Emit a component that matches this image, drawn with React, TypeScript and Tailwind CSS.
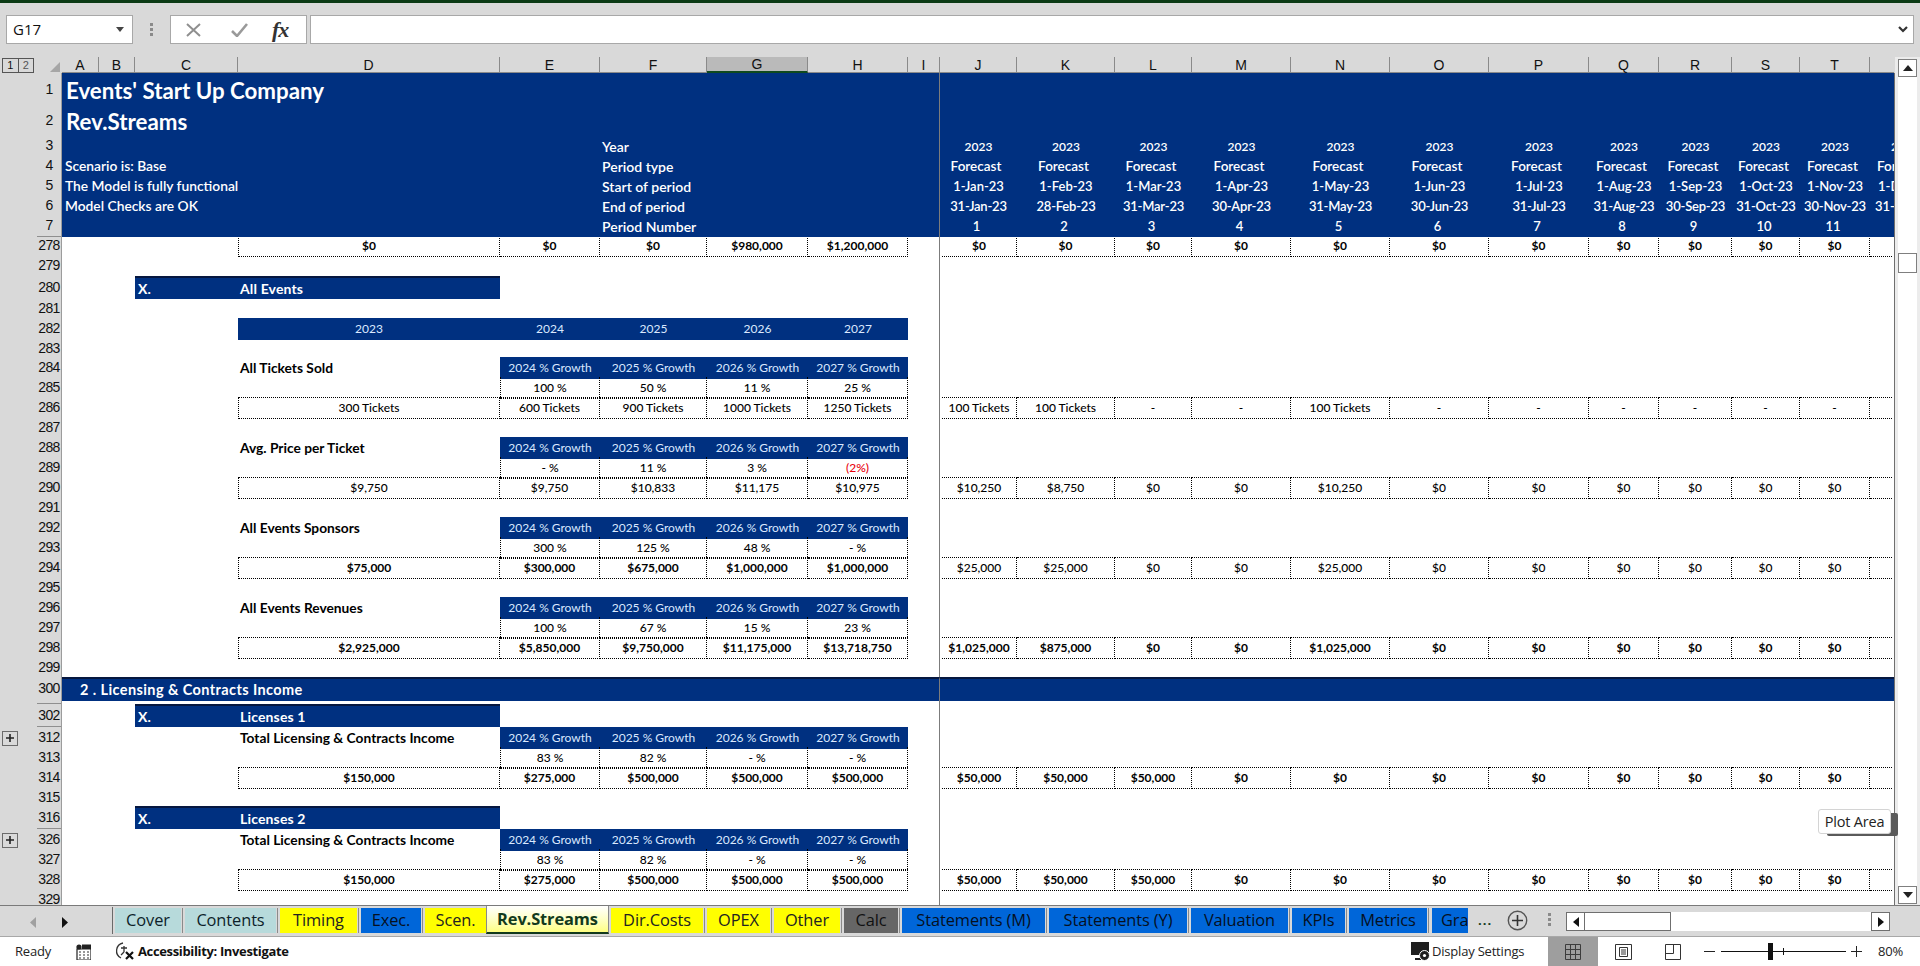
import React from "react";
import clsx from "clsx";

const gridCols =
  "grid grid-cols-[62px_37px_36px_103px_262px_100px_107px_101px_100px_32px_77px_98px_77px_99px_99px_99px_100px_70px_73px_68px_70px_24px]";
const COLS = "A B C D E F G H I J K L M N O P Q R S T U".split(" ");
const MONTH_COLS = "J K L M N O P Q R S T".split(" ");
const NAVY = "bg-[#003080]";
const WHITE_TXT = "text-white justify-start";
const OVER = "relative z-[1]";

type Cell = { t?: React.ReactNode; c?: string };
type Cells = Record<string, Cell>;

const box = "border-b border-r border-dotted border-black justify-center text-black";
const boxL = "border-l";
const boxT = "border-t";

function PlusBox() {
  return (
    <div className="w-[16px] h-[15px] border border-[#6b6b6b] flex items-center justify-center">
      <svg width="8" height="8" viewBox="0 0 8 8">
        <path d="M0 4h8M4 0v8" stroke="#222" strokeWidth="1.6" />
      </svg>
    </div>
  );
}

function Row({ n, h, cells = {}, plus, bottom }: { n: string; h: string; cells?: Cells; plus?: boolean; bottom?: string }) {
  return (
    <div className={clsx(gridCols, h, bottom)}>
      <div className="flex bg-[#d9d9d9] border-r border-[#9c9c9c]">
        <div className="w-[37px] pl-[2px] flex items-center">{plus && <PlusBox />}</div>
        <div className="flex-1 flex items-center justify-center border-b border-[#8f8f8f] font-['Liberation_Sans',sans-serif] text-[14px] tracking-[-0.6px] text-[#111]">
          {n}
        </div>
      </div>
      {COLS.map((col) => {
        const cell = cells[col];
        return (
          <div
            key={col}
            className={clsx(
              "flex items-center min-w-0 whitespace-nowrap",
              cell?.c,
              col === "I" && "border-r border-r-[#7c7c7c]"
            )}
          >
            {cell?.t}
          </div>
        );
      })}
    </div>
  );
}

const navyAll = (): Cells => Object.fromEntries(COLS.map((c) => [c, { c: NAVY }]));

function header(n: string, h: string, left: Cells, month?: (col: string, i: number) => Cell, bottom?: string, u?: Cell) {
  const cells = navyAll();
  Object.keys(left).forEach((k) => (cells[k] = { ...left[k], c: clsx(NAVY, OVER, "pt-[1px]", left[k].c) }));
  if (month)
    MONTH_COLS.forEach((col, i) => {
      const m = month(col, i);
      cells[col] = { ...m, c: clsx(NAVY, "pt-[1px] text-white justify-center font-semibold", m.c) };
    });
  if (u) cells.U = { ...u, c: clsx(NAVY, "pt-[1px] text-white justify-start font-semibold overflow-hidden", u.c) };
  return <Row key={n} n={n} h={h} cells={cells} bottom={bottom} />;
}

const starts = ["1-Jan-23", "1-Feb-23", "1-Mar-23", "1-Apr-23", "1-May-23", "1-Jun-23", "1-Jul-23", "1-Aug-23", "1-Sep-23", "1-Oct-23", "1-Nov-23"];
const ends = ["31-Jan-23", "28-Feb-23", "31-Mar-23", "30-Apr-23", "31-May-23", "30-Jun-23", "31-Jul-23", "31-Aug-23", "30-Sep-23", "31-Oct-23", "30-Nov-23"];

const sideA = (t: string): Cell => ({ t, c: clsx(WHITE_TXT, "text-[13.8px] font-semibold pl-[3px]") });
const sideF = (t: string): Cell => ({ t, c: clsx(WHITE_TXT, "text-[14px] font-semibold pl-[2px]") });

function dataRow(
  n: string,
  d: string,
  yrs: string[],
  months: string[] | null,
  weight: string,
  weightM: string = weight,
  top = true
) {
  const cells: Cells = {};
  cells.D = { t: d, c: clsx(box, boxL, top && boxT, weight) };
  ["E", "F", "G", "H"].forEach((c, i) => {
    cells[c] = { t: yrs[i], c: clsx(box, weight, top && boxT) };
  });
  if (months) {
    MONTH_COLS.forEach((c, i) => {
      cells[c] = { t: months[i], c: clsx(box, top && boxT, weightM, c === "J" && "ml-[2px]") };
    });
    cells.U = { c: clsx("border-b border-dotted border-black", top && boxT, "mr-[2px]") };
  }
  return <Row key={n} n={n} h="h-[20px]" cells={cells} />;
}

const TITLE_CELL = "font-bold text-[13.75px] text-black pl-[2px]";
const GROWTH_CELL = clsx(NAVY, "justify-center text-[#dbe9ff] text-[12px]");

function growthHead(n: string, title: string, plus?: boolean) {
  const cells: Cells = {};
  cells.D = { t: title, c: TITLE_CELL };
  ["E", "F", "G", "H"].forEach((c, i) => {
    cells[c] = { t: `${2024 + i} % Growth`, c: GROWTH_CELL };
  });
  return <Row key={n} n={n} h="h-[20px]" cells={cells} plus={plus} />;
}

function growthVals(n: string, v: (string | [string, string])[], h = "h-[20px]") {
  const cells: Cells = {};
  ["E", "F", "G", "H"].forEach((c, i) => {
    const val = v[i];
    const red = Array.isArray(val);
    cells[c] = { t: red ? val[0] : (val as string), c: clsx(box, "font-medium", c === "E" && boxL, red && "!text-[#e8000b]") };
  });
  return <Row key={n} n={n} h={h} cells={cells} />;
}

function xBanner(n: string, title: string, h: string) {
  const top = "border-t-2 border-t-[#06173f]";
  const cells: Cells = {
    C: { t: <span className="pl-[3px]">X.</span>, c: clsx(NAVY, top, "text-white font-bold text-[14px]") },
    D: { t: <span className="pl-[2px]">{title}</span>, c: clsx(NAVY, top, "text-white font-bold text-[14px] tracking-[0.15px]") },
  };
  return <Row key={n} n={n} h={h} cells={cells} />;
}

const zero = (n: number) => Array(n).fill("$0");

function ColHeader() {
  return (
    <div className={clsx(gridCols, "h-[16px] font-['Liberation_Sans',sans-serif] text-[14px] text-[#111]")}>
      <div className="flex items-center relative">
        <div className="ml-[2px] flex w-[32px] h-[15px] border border-[#555] text-[11px] leading-none">
          <span className="flex-1 flex items-center justify-center border-r border-[#555]">1</span>
          <span className="flex-1 flex items-center justify-center text-[#555]">2</span>
        </div>
        <svg className="ml-[16px] mt-[4px]" width="10" height="10" viewBox="0 0 10 10">
          <path d="M10 0v10H0z" fill="#a6a6a6" />
        </svg>
      </div>
      {COLS.map((c) => (
        <div
          key={c}
          className={clsx(
            "flex items-center justify-center border-r border-[#8a8a8a] border-b leading-none",
            c === "G" ? "bg-[#bababa] border-b-2 border-b-[#0f4a1e]" : "border-b-[#8a8a8a]",
            c === "U" && "border-r-0"
          )}
        >
          {c === "U" ? "" : c}
        </div>
      ))}
    </div>
  );
}

function FormulaBar() {
  return (
    <div className="h-[54px] pt-[12px] pl-[6px] pr-[6px] flex items-start shrink-0">
      <div className="w-[127px] h-[29px] bg-white border border-[#a8a8a8] flex items-center justify-between pl-[6px] pr-[8px]">
        <span className="font-['Open_Sans',sans-serif] text-[15px] text-[#111]">G17</span>
        <svg width="8" height="5" viewBox="0 0 8 5">
          <path d="M0 0h8L4 5z" fill="#444" />
        </svg>
      </div>
      <div className="w-[37px] flex flex-col items-center justify-center gap-[2px] h-[29px]">
        <span className="w-[3px] h-[3px] bg-[#8a8a8a]" />
        <span className="w-[3px] h-[3px] bg-[#8a8a8a]" />
        <span className="w-[3px] h-[3px] bg-[#8a8a8a]" />
      </div>
      <div className="w-[137px] h-[29px] bg-white border border-[#a8a8a8] flex items-center">
        <svg className="ml-[15px]" width="15" height="14" viewBox="0 0 15 14">
          <path d="M1 1l13 12M14 1L1 13" stroke="#8f8f8f" strokeWidth="2" fill="none" />
        </svg>
        <svg className="ml-[30px]" width="17" height="14" viewBox="0 0 17 14">
          <path d="M1 8l5 5L16 1" stroke="#9a9a9a" strokeWidth="2.6" fill="none" />
        </svg>
        <span className="ml-[24px] font-['Liberation_Serif',serif] italic font-bold text-[22px] leading-none text-[#333] tracking-[-1px]">
          fx
        </span>
      </div>
      <div className="ml-[3px] flex-1 h-[29px] bg-white border border-[#a8a8a8] flex items-center justify-end pr-[5px]">
        <svg width="10" height="7" viewBox="0 0 10 7">
          <path d="M1 1l4 4 4-4" stroke="#333" strokeWidth="2.2" fill="none" />
        </svg>
      </div>
    </div>
  );
}

function VScroll() {
  const Btn = ({ up }: { up?: boolean }) => (
    <div className="w-[19px] h-[18px] bg-white border border-[#7f7f7f] flex items-center justify-center shrink-0">
      <svg width="10" height="6" viewBox="0 0 10 6">
        <path d={up ? "M0 6h10L5 0z" : "M0 0h10L5 6z"} fill="#222" />
      </svg>
    </div>
  );
  return (
    <div className="flex-1 pl-[3px] flex flex-col bg-[#ececec] pt-[2px]">
      <div className="w-[19px] flex-1 flex flex-col bg-white">
        <Btn up />
        <div className="w-[19px] h-[20px] mt-[176px] border border-[#7f7f7f] bg-white shrink-0" />
        <div className="flex-1" />
        <Btn />
      </div>
      <div className="h-[1px]" />
    </div>
  );
}

const tabs: [string, string, string][] = [
  ["Cover", "w-[66px]", "bg-[#b7dadb] text-[#0d1f2a]"],
  ["Contents", "w-[91px]", "bg-[#b7dadb] text-[#0d1f2a]"],
  ["Timing", "w-[77px]", "bg-[#ffff00] text-[#222]"],
  ["Exec.", "w-[60px]", "bg-[#0066d9] text-[#06101f]"],
  ["Scen.", "w-[61px]", "bg-[#ffff00] text-[#222]"],
  ["Rev.Streams", "w-[122px]", "ACTIVE"],
  ["Dir.Costs", "w-[92px]", "bg-[#ffff00] text-[#222]"],
  ["OPEX", "w-[63px]", "bg-[#ffff00] text-[#222]"],
  ["Other", "w-[66px]", "bg-[#ffff00] text-[#222]"],
  ["Calc", "w-[54px]", "bg-[#666666] text-[#111]"],
  ["Statements (M)", "w-[143px]", "bg-[#0066d9] text-[#06101f]"],
  ["Statements (Y)", "w-[138px]", "bg-[#0066d9] text-[#06101f]"],
  ["Valuation", "w-[97px]", "bg-[#0066d9] text-[#06101f]"],
  ["KPIs", "w-[53px]", "bg-[#0066d9] text-[#06101f]"],
  ["Metrics", "w-[78px]", "bg-[#0066d9] text-[#06101f]"],
];

function TabStrip() {
  return (
    <div className="h-[32px] shrink-0 bg-[#d9d9d9] border-t border-t-[#7a7a7a] border-b border-b-[#a8a8a8] flex items-start font-['Open_Sans',sans-serif] text-[16.4px] tracking-[-0.1px] leading-none">
      <div className="w-[112px] h-[28px] flex items-center pt-[4px] shrink-0">
        <svg className="ml-[30px]" width="6" height="11" viewBox="0 0 6 11">
          <path d="M6 0v11L0 5.5z" fill="#a0a0a0" />
        </svg>
        <svg className="ml-[26px]" width="6" height="11" viewBox="0 0 6 11">
          <path d="M0 0v11l6-5.5z" fill="#111" />
        </svg>
      </div>
      <span className="w-px h-[27px] mt-[1px] bg-[#6a6a6a] shrink-0" />
      <div className="flex items-start">
        {tabs.map(([t, w, c], i) =>
          c === "ACTIVE" ? (
            <div
              key={t}
              className="w-[123px] h-[28px] flex items-center justify-center font-bold text-[#123a1c] bg-gradient-to-b from-white to-[#ffff80] border-l border-r border-[#8a8a8a] border-b-2 border-b-[#123a1c]"
            >
              {t}
            </div>
          ) : (
            <div key={t} className="flex items-start">
              <div className={clsx(w, c, "h-[25px] mt-[2px] ml-[2px] flex items-center justify-center")}>{t}</div>
              {i !== 4 && <span className="ml-[1px] w-px h-[25px] mt-[2px] bg-[#8a8a8a]" />}
            </div>
          )
        )}
        <div className="w-[36px] h-[25px] mt-[2px] ml-[3px] bg-[#0066d9] text-[#06101f] flex items-center pl-[9px] overflow-hidden">Gra</div>
      </div>
      <span className="ml-[10px] mt-[8px] text-[#123a1c] font-bold text-[13px] tracking-[1px]">...</span>
      <svg className="ml-[15px] mt-[4px]" width="21" height="21" viewBox="0 0 21 21">
        <circle cx="10.5" cy="10.5" r="9.2" fill="none" stroke="#555" strokeWidth="1.4" />
        <path d="M10.5 5v11M5 10.5h11" stroke="#333" strokeWidth="1.6" />
      </svg>
      <div className="ml-[20px] mt-[7px] flex flex-col gap-[2px]">
        <span className="w-[3px] h-[3px] bg-[#8a8a8a]" />
        <span className="w-[3px] h-[3px] bg-[#8a8a8a]" />
        <span className="w-[3px] h-[3px] bg-[#8a8a8a]" />
      </div>
      <div className="ml-[15px] mt-[6px] w-[324px] h-[19px] bg-white flex">
        <div className="w-[19px] h-full border border-[#6f6f6f] flex items-center justify-center shrink-0">
          <svg width="6" height="10" viewBox="0 0 6 10">
            <path d="M6 0v10L0 5z" fill="#111" />
          </svg>
        </div>
        <div className="w-[86px] h-full border border-l-0 border-[#6f6f6f] shrink-0" />
        <div className="flex-1" />
        <div className="w-[19px] h-full border border-[#6f6f6f] flex items-center justify-center shrink-0">
          <svg width="6" height="10" viewBox="0 0 6 10">
            <path d="M0 0v10l6-5z" fill="#111" />
          </svg>
        </div>
      </div>
    </div>
  );
}

function StatusBar() {
  return (
    <div className="h-[29px] shrink-0 bg-white flex items-center font-['Open_Sans',sans-serif] text-[13px] tracking-[-0.2px] text-[#222] relative">
      <span className="ml-[15px] w-[61px]">Ready</span>
      <svg width="15" height="16" viewBox="0 0 15 16" className="shrink-0">
        <circle cx="3" cy="3" r="2.6" fill="#222" />
        <path d="M6 1h9v4H1v11h14V5" fill="none" stroke="#222" strokeWidth="1.2" />
        <path d="M6 1h9v4H6z" fill="#222" />
        <path d="M3 8h2M7 8h2M11 8h2M3 11h2M7 11h2M11 11h2M3 14h2M7 14h2M11 14h2" stroke="#333" strokeWidth="1.2" />
      </svg>
      <svg className="ml-[24px] shrink-0" width="20" height="19" viewBox="0 0 20 19">
        <path d="M8 1a8 8 0 0 0-2 15" fill="none" stroke="#333" strokeWidth="1.3" />
        <path d="M9 4v6M6 6h6M9 10l-3 3" fill="none" stroke="#333" strokeWidth="1.3" />
        <path d="M11 10l7 7M18 10l-7 7" stroke="#111" strokeWidth="2.2" />
      </svg>
      <span className="ml-[3px] font-bold text-[#111] tracking-[-0.35px]">Accessibility: Investigate</span>
      <div className="flex-1" />
      <svg width="22" height="21" viewBox="0 0 22 21" className="shrink-0">
        <path d="M1 1h18v13H1z" fill="#1f1f1f" />
        <path d="M5 18h6" stroke="#1f1f1f" strokeWidth="2" />
        <circle cx="14.5" cy="14.5" r="5" fill="#1f1f1f" stroke="#fff" strokeWidth="1" />
        <circle cx="14.5" cy="14.5" r="1.6" fill="#fff" />
      </svg>
      <span className="w-[116px] shrink-0 text-[#222]">Display Settings</span>
      <div className="w-[50px] h-full bg-[#9e9e9e] flex items-center justify-center shrink-0">
        <svg width="16" height="16" viewBox="0 0 16 16">
          <path d="M.5.5h15v15H.5zM.5 5.5h15M.5 10.5h15M5.5.5v15M10.5.5v15" fill="none" stroke="#3c3c3c" />
        </svg>
      </div>
      <div className="w-[50px] flex justify-center shrink-0">
        <svg width="17" height="16" viewBox="0 0 17 16">
          <path d="M.5.5h16v15H.5z" fill="none" stroke="#333" />
          <path d="M4.5 3.5h8v9h-8zM6 6h5M6 8h5M6 10h5" fill="none" stroke="#333" />
        </svg>
      </div>
      <div className="w-[50px] flex justify-center shrink-0">
        <svg width="16" height="16" viewBox="0 0 16 16">
          <path d="M.5.5h15v15H.5zM8.5.5v9H.5" fill="none" stroke="#333" />
        </svg>
      </div>
      <span className="ml-[6px] w-[11px] h-[1px] bg-[#222] shrink-0" />
      <div className="ml-[6px] w-[125px] h-[1px] bg-[#111] relative shrink-0">
        <span className="absolute left-[47px] -top-[8px] w-[5px] h-[17px] bg-[#111]" />
        <span className="absolute left-[62px] -top-[3px] w-px h-[7px] bg-[#111]" />
      </div>
      <svg className="ml-[5px] shrink-0" width="11" height="11" viewBox="0 0 11 11">
        <path d="M5.5 0v11M0 5.5h11" stroke="#222" strokeWidth="1" />
      </svg>
      <span className="ml-[16px] w-[31px] shrink-0 text-[#222]">80%</span>
      <div className="w-[11px] shrink-0" />
    </div>
  );
}

export default function App() {
  const titleCell = "text-white font-bold text-[22.3px] justify-start";
  return (
    <div className="w-[1920px] h-[966px] overflow-hidden flex flex-col bg-[#d9d9d9] font-['Lato',sans-serif] text-[12px] text-black relative">
      <div className="h-[3px] bg-[#0b3a14] shrink-0" />
      <FormulaBar />
      <div className="flex h-[848px] shrink-0">
        <div className="w-[1895px] shrink-0 flex flex-col">
          <div className="w-[1894px]">
            <ColHeader />
          </div>
          <div className="flex-1 bg-white border-r border-[#6f6f6f]">
            {header("1", "h-[31px]", { A: { t: <span className="pl-[4px]">Events' Start Up Company</span>, c: titleCell } })}
            {header("2", "h-[31px]", { A: { t: <span className="pl-[4px]">Rev.Streams</span>, c: titleCell } })}
            {header("3", "h-[20px]", { F: sideF("Year") }, () => ({ t: "2023", c: "text-[12px]" }), undefined, { t: "2023", c: "text-[12px] pl-[21px]" })}
            {header("4", "h-[20px]", { A: sideA("Scenario is: Base"), F: sideF("Period type") }, () => ({ t: "Forecast", c: "text-[13.5px] pr-[5px]" }), undefined, { t: "Forecast", c: "text-[13.5px] pl-[7px]" })}
            {header("5", "h-[20px]", { A: sideA("The Model is fully functional"), F: sideF("Start of period") }, (_, i) => ({ t: starts[i], c: "text-[13px]" }), undefined, { t: "1-Dec-23", c: "text-[13px] pl-[8px]" })}
            {header("6", "h-[20px]", { A: sideA("Model Checks are OK"), F: sideF("End of period") }, (_, i) => ({ t: ends[i], c: "text-[13px] tracking-[-0.2px]" }), undefined, { t: "31-Dec-23", c: "text-[13px] pl-[5px]" })}
            {header("7", "h-[20px]", { F: sideF("Period Number") }, (_, i) => ({ t: String(i + 1), c: "text-[13px] pr-[4px]" }), "border-b-2 border-b-[#4a4a4a] box-content -mb-[2px] relative")}
            {dataRow("278", "$0", ["$0", "$0", "$980,000", "$1,200,000"], zero(11), "font-bold", "font-bold", false)}
            <Row n="279" h="h-[21px]" />
            {xBanner("280", "All Events", "h-[22px]")}
            <Row n="281" h="h-[20px]" />
            <Row
              n="282"
              h="h-[20px]"
              cells={{
                D: { t: "2023", c: clsx(NAVY, "justify-center text-[#dbe9ff]") },
                E: { t: "2024", c: clsx(NAVY, "justify-center text-[#dbe9ff]") },
                F: { t: "2025", c: clsx(NAVY, "justify-center text-[#dbe9ff]") },
                G: { t: "2026", c: clsx(NAVY, "justify-center text-[#dbe9ff]") },
                H: { t: "2027", c: clsx(NAVY, "justify-center text-[#dbe9ff]") },
              }}
            />
            <Row n="283" h="h-[19px]" />
            {growthHead("284", "All Tickets Sold")}
            {growthVals("285", ["100 %", "50 %", "11 %", "25 %"])}
            {dataRow(
              "286",
              "300 Tickets",
              ["600 Tickets", "900 Tickets", "1000 Tickets", "1250 Tickets"],
              ["100 Tickets", "100 Tickets", "-", "-", "100 Tickets", "-", "-", "-", "-", "-", "-"],
              "font-medium"
            )}
            <Row n="287" h="h-[20px]" />
            {growthHead("288", "Avg. Price per Ticket")}
            {growthVals("289", ["- %", "11 %", "3 %", ["(2%)", "red"]])}
            {dataRow(
              "290",
              "$9,750",
              ["$9,750", "$10,833", "$11,175", "$10,975"],
              ["$10,250", "$8,750", "$0", "$0", "$10,250", ...zero(6)],
              "font-medium"
            )}
            <Row n="291" h="h-[20px]" />
            {growthHead("292", "All Events Sponsors")}
            {growthVals("293", ["300 %", "125 %", "48 %", "- %"])}
            {dataRow(
              "294",
              "$75,000",
              ["$300,000", "$675,000", "$1,000,000", "$1,000,000"],
              ["$25,000", "$25,000", "$0", "$0", "$25,000", ...zero(6)],
              "font-bold",
              "font-medium"
            )}
            <Row n="295" h="h-[20px]" />
            {growthHead("296", "All Events Revenues")}
            {growthVals("297", ["100 %", "67 %", "15 %", "23 %"])}
            {dataRow(
              "298",
              "$2,925,000",
              ["$5,850,000", "$9,750,000", "$11,175,000", "$13,718,750"],
              ["$1,025,000", "$875,000", "$0", "$0", "$1,025,000", ...zero(6)],
              "font-bold"
            )}
            <Row n="299" h="h-[20px]" />
            <Row
              n="300"
              h="h-[23px]"
              cells={Object.fromEntries(
                COLS.map((c) => [
                  c,
                  c === "A"
                    ? {
                        t: <span className="pl-[18px]">2 . Licensing &amp; Contracts Income</span>,
                        c: clsx(NAVY, OVER, "border-t-2 border-t-[#06173f] text-white font-bold text-[14.5px] tracking-[0.4px]"),
                      }
                    : { c: clsx(NAVY, "border-t-2 border-t-[#06173f]") },
                ])
              )}
            />
            <Row n="" h="h-[4px]" />
            {xBanner("302", "Licenses 1", "h-[23px]")}
            {growthHead("312", "Total Licensing & Contracts Income", true)}
            {growthVals("313", ["83 %", "82 %", "- %", "- %"])}
            {dataRow(
              "314",
              "$150,000",
              ["$275,000", "$500,000", "$500,000", "$500,000"],
              ["$50,000", "$50,000", "$50,000", ...zero(8)],
              "font-bold"
            )}
            <Row n="315" h="h-[19px]" />
            {xBanner("316", "Licenses 2", "h-[23px]")}
            {growthHead("326", "Total Licensing & Contracts Income", true)}
            {growthVals("327", ["83 %", "82 %", "- %", "- %"])}
            {dataRow(
              "328",
              "$150,000",
              ["$275,000", "$500,000", "$500,000", "$500,000"],
              ["$50,000", "$50,000", "$50,000", ...zero(8)],
              "font-bold"
            )}
            <Row n="329" h="h-[16px]" />
          </div>
        </div>
        <VScroll />
      </div>
      <TabStrip />
      <StatusBar />
      <div className="absolute left-[1818px] top-[809px] w-[73px] h-[25px] bg-white border border-[#d4d4d4] rounded-[3px] flex items-center justify-center font-['Open_Sans',sans-serif] text-[14.5px] tracking-[-0.2px] text-[#222] shadow-[8px_3px_0_-1px_#5a5a5a]">
        Plot Area
      </div>
    </div>
  );
}
